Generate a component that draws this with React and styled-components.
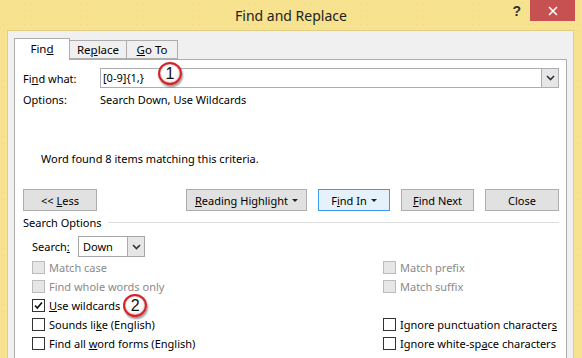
import React from 'react';
import styled, { createGlobalStyle } from 'styled-components';

const GlobalStyle = createGlobalStyle`
  * { box-sizing: border-box; }
  body { margin: 0; }
  #root { width: 582px; height: 358px; overflow: hidden; }
`;

const leftOptions = [
  { text: 'Match case', disabled: true },
  { text: 'Find whole words only', disabled: true },
  { text: 'Use wildcards', key: 'U', checked: true, badge: '2' },
  { text: 'Sounds like (English)', key: 'k' },
  { text: 'Find all word forms (English)', key: 'w' },
];

const rightOptions = [
  { text: 'Match prefix', disabled: true },
  { text: 'Match suffix', disabled: true },
  null,
  { text: 'Ignore punctuation characters', key: 's', last: true },
  { text: 'Ignore white-space characters', key: 'a' },
];

// underline the accelerator letter, like the Windows dialog does
function Accel({ text, k, last }) {
  if (!k) return text;
  const i = last ? text.lastIndexOf(k) : text.indexOf(k);
  return (
    <>
      {text.slice(0, i)}
      <u>{text[i]}</u>
      {text.slice(i + 1)}
    </>
  );
}

function Chevron() {
  return (
    <svg width="9" height="6" viewBox="0 0 9 6">
      <path d="M1 1 L4.5 4.5 L8 1" fill="none" stroke="#333" strokeWidth="1.6" />
    </svg>
  );
}

function Option({ item }) {
  if (!item) return <Cell />;
  return (
    <Cell>
      <Box disabled={item.disabled}>
        {item.checked && (
          <svg width="11" height="11" viewBox="0 0 11 11">
            <path d="M2 5.5 L4.3 8 L9 2.5" fill="none" stroke="#111" strokeWidth="1.7" />
          </svg>
        )}
      </Box>
      <OptionLabel disabled={item.disabled}>
        <Accel text={item.text} k={item.key} last={item.last} />
      </OptionLabel>
      {item.badge && <Badge inline>{item.badge}</Badge>}
    </Cell>
  );
}

export default function App() {
  const cells = [];
  leftOptions.forEach((l, i) => {
    cells.push(<Option key={'l' + i} item={l} />);
    cells.push(<Option key={'r' + i} item={rightOptions[i]} />);
  });

  return (
    <Window>
      <GlobalStyle />
      <TitleBar>
        <span />
        <Title>Find and Replace</Title>
        <Controls>
          <Help>?</Help>
          <CloseBtn>
            <svg width="10" height="10" viewBox="0 0 10 10">
              <path d="M1 1 L9 9 M9 1 L1 9" stroke="#fff" strokeWidth="1.6" />
            </svg>
          </CloseBtn>
        </Controls>
      </TitleBar>
      <Client>
        <Tabs>
          <Tab active width={56}>Fin<u>d</u></Tab>
          <Tab width={58}>Re<u>p</u>lace</Tab>
          <Tab width={52}><u>G</u>o To</Tab>
        </Tabs>
        <Panel>
          <Badge style={{ left: 143, top: 2 }}>1</Badge>
          <FieldRow>
            <FieldLabel>Fi<u>n</u>d what:</FieldLabel>
            <Combo>
              <ComboText>[0-9]{'{'}1,{'}'}</ComboText>
              <ComboButton><Chevron /></ComboButton>
            </Combo>
          </FieldRow>
          <InfoRow>
            <FieldLabel>Options:</FieldLabel>
            <span>Search Down, Use Wildcards</span>
          </InfoRow>
          <Message>Word found 8 items matching this criteria.</Message>
          <ButtonRow>
            <Button width={74} push><span>&lt;&lt; <u>L</u>ess</span></Button>
            <Button width={121}><u>R</u>eading Highlight<Caret /></Button>
            <Button width={72} focused>F<u>i</u>nd In<Caret /></Button>
            <Button width={73}><u>F</u>ind Next</Button>
            <Button width={74}>Close</Button>
          </ButtonRow>
          <GroupHead>
            <span>Search Options</span>
            <Rule />
          </GroupHead>
          <SearchBlock>
            <SearchRow>
              <SearchLabel>Search<u>:</u></SearchLabel>
              <Select>
                <SelectText>Down</SelectText>
                <SelectButton><Chevron /></SelectButton>
              </Select>
            </SearchRow>
            <OptionGrid>{cells}</OptionGrid>
          </SearchBlock>
        </Panel>
      </Client>
    </Window>
  );
}

const Window = styled.div`
  width: 582px;
  height: 358px;
  display: flex;
  flex-direction: column;
  background-color: #f7e38f;
  background-image: radial-gradient(#f0d784 0.6px, transparent 0.8px);
  background-size: 7px 7px;
  font-family: 'Noto Sans', 'Open Sans', sans-serif;
  font-size: 11px;
  color: #000;
  overflow: hidden;

  u { text-decoration-thickness: 1px; text-underline-offset: 1px; }
`;

const TitleBar = styled.div`
  height: 30px;
  flex: none;
  display: grid;
  grid-template-columns: 1fr auto 1fr;
`;

const Title = styled.div`
  font-size: 14px;
  color: #222;
  line-height: 32px;
`;

const Controls = styled.div`
  justify-self: end;
  display: flex;
  align-items: flex-start;
  margin-right: 7px;
`;

const Help = styled.div`
  font-family: 'Liberation Sans', Arial, sans-serif;
  font-weight: bold;
  font-size: 14px;
  color: #333;
  line-height: 22px;
  margin-right: 9px;
`;

const CloseBtn = styled.div`
  width: 45px;
  height: 21px;
  background: #c75050;
  display: flex;
  align-items: center;
  justify-content: center;
`;

const Client = styled.div`
  flex: 1;
  margin: 0 8px 0 7px;
  background: #f0f0f0;
  border: 1px solid #e3cd80;
  border-bottom: none;
  padding: 7px 6px 0 6px;
  display: flex;
  flex-direction: column;
`;

const Tabs = styled.div`
  height: 21px;
  display: flex;
  align-items: flex-end;
  position: relative;
  z-index: 1;
`;

const Tab = styled.div`
  width: ${p => p.width}px;
  height: ${p => (p.active ? 22 : 19)}px;
  margin-bottom: ${p => (p.active ? -1 : 0)}px;
  margin-left: ${p => (p.active ? 0 : -1)}px;
  background: ${p => (p.active ? '#fff' : '#f0f0f0')};
  border: 1px solid #adadad;
  border-bottom: ${p => (p.active ? 'none' : '1px solid #adadad')};
  display: flex;
  align-items: center;
  justify-content: center;
  padding-bottom: ${p => (p.active ? 2 : 0)}px;
  font-size: 11.5px;

  &:first-child { margin-left: 0; }
`;

const Panel = styled.div`
  flex: 1;
  position: relative;
  background: #fff;
  border: 1px solid #adadad;
  border-bottom: none;
  padding: 8px 7px 0 8px;
`;

const Badge = styled.div`
  position: ${p => (p.inline ? 'relative' : 'absolute')};
  z-index: 2;
  width: 24px;
  height: 23px;
  margin: ${p => (p.inline ? '-4px 0 -4px 3px' : '0')};
  border-radius: 50%;
  border: 2.5px solid #d3222a;
  background: radial-gradient(circle at 45% 38%, #fff 40%, #f4ebeb 70%, #e2b3b3 100%);
  box-shadow: 1px 2px 2px rgba(0, 0, 0, 0.4), inset 0 0 1px #900;
  display: flex;
  align-items: center;
  justify-content: center;
  font-family: 'Liberation Sans', Arial, sans-serif;
  font-size: 16px;
  color: #111;
`;

const FieldRow = styled.div`
  height: 20px;
  display: flex;
  align-items: center;
`;

const FieldLabel = styled.div`
  width: 77px;
  flex: none;
`;

const Combo = styled.div`
  flex: 1;
  height: 20px;
  display: flex;
  border: 1px solid #abadb3;
  background: #fff;
`;

const ComboText = styled.div`
  flex: 1;
  padding-left: 2px;
  line-height: 18px;
`;

const ComboButton = styled.div`
  width: 17px;
  background: #e6e6e6;
  border-left: 1px solid #adadad;
  display: flex;
  align-items: center;
  justify-content: center;
`;

const InfoRow = styled.div`
  height: 16px;
  margin-top: 3px;
  display: flex;
  align-items: center;
`;

const Message = styled.div`
  height: 16px;
  line-height: 16px;
  margin-top: 44px;
  padding-left: 18px;
`;

const ButtonRow = styled.div`
  margin-top: 22px;
  display: flex;
  gap: 11px;
`;

const Button = styled.div`
  width: ${p => p.width}px;
  height: 22px;
  margin-right: ${p => (p.push ? 'auto' : '0')};
  background: ${p => (p.focused ? '#e5f1fb' : '#e1e1e1')};
  border: 1px solid ${p => (p.focused ? '#3c9af2' : '#adadad')};
  display: flex;
  align-items: center;
  justify-content: center;
`;

const Caret = styled.span`
  width: 0;
  height: 0;
  margin-left: 4px;
  border-left: 3px solid transparent;
  border-right: 3px solid transparent;
  border-top: 3px solid #222;
`;

const GroupHead = styled.div`
  height: 16px;
  margin-top: 3px;
  display: flex;
  align-items: center;
  gap: 6px;
`;

const Rule = styled.div`
  flex: 1;
  height: 1px;
  background: #dcdcdc;
`;

const SearchBlock = styled.div`
  padding-left: 9px;
`;

const SearchRow = styled.div`
  margin-top: 6px;
  height: 21px;
  display: flex;
  align-items: center;
`;

const SearchLabel = styled.div`
  width: 46px;
`;

const Select = styled.div`
  width: 67px;
  height: 21px;
  display: flex;
  border: 1px solid #a6a6a6;
  background: #fff;
`;

const SelectText = styled.div`
  flex: 1;
  padding-left: 4px;
  line-height: 19px;
`;

const SelectButton = styled.div`
  width: 17px;
  background: #e6e6e6;
  border-left: 1px solid #adadad;
  display: flex;
  align-items: center;
  justify-content: center;
`;

const OptionGrid = styled.div`
  margin-top: 1px;
  display: grid;
  grid-template-columns: 351px 1fr;
  grid-auto-rows: 19px;
`;

const Cell = styled.div`
  display: flex;
  align-items: center;
`;

const Box = styled.div`
  width: 13px;
  height: 13px;
  flex: none;
  border: 1px solid ${p => (p.disabled ? '#bcbcbc' : '#333')};
  background: ${p => (p.disabled ? '#e6e6e6' : '#fff')};
  display: flex;
  align-items: center;
  justify-content: center;
`;

const OptionLabel = styled.span`
  margin-left: 4px;
  color: ${p => (p.disabled ? '#8a8a8a' : '#000')};
`;
